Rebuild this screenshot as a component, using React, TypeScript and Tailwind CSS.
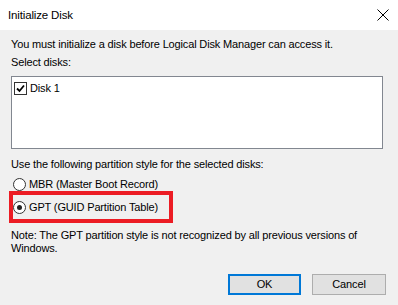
export default function App() {
  return (
    <div className="w-[398px] h-[305px] bg-[#f0f0f0] text-[11px] tracking-[-0.15px] text-black font-['Liberation_Sans',sans-serif] whitespace-nowrap overflow-hidden">
      <div className="h-[30px] bg-white flex items-center justify-between pl-[8px] pr-[9px]">
        <span className="leading-[15px] text-[11.5px]">Initialize Disk</span>
        <svg width="12" height="12" viewBox="0 0 12 12" className="text-black">
          <path d="M0.5 0.5 L11.5 11.5 M11.5 0.5 L0.5 11.5" stroke="currentColor" strokeWidth="1" />
        </svg>
      </div>

      <div className="px-[11px] pt-[7px]">
        <p className="leading-[15px]">You must initialize a disk before Logical Disk Manager can access it.</p>
        <p className="leading-[15px] mt-[3px]">Select disks:</p>

        <div className="mt-[6px] h-[73px] w-[372px] bg-white border border-[#828790] pt-[4px] pl-[2px]">
          <div className="flex items-center gap-[3px] leading-[15px]">
            <span className="w-[13px] h-[13px] border border-[#333] bg-white flex items-center justify-center">
              <svg width="9" height="9" viewBox="0 0 9 9">
                <path d="M1 4.5 L3.5 7 L8 1.5" stroke="#000" strokeWidth="1.8" fill="none" />
              </svg>
            </span>
            <span>Disk 1</span>
          </div>
        </div>

        <p className="leading-[15px] mt-[8px]">Use the following partition style for the selected disks:</p>

        <div className="mt-[6px] flex items-center gap-[3px] leading-[13px] ml-[2px]">
          <span className="w-[13px] h-[13px] rounded-full border border-[#333] bg-white" />
          <span>MBR (Master Boot Record)</span>
        </div>

        <div className="ml-[-2px] w-[164px] h-[32px] border-[4px] border-[#ec1c24] flex items-center gap-[3px] pl-0">
          <span className="w-[13px] h-[13px] rounded-full border border-[#333] bg-white flex items-center justify-center">
            <span className="w-[5px] h-[5px] rounded-full bg-[#222]" />
          </span>
          <span className="leading-[15px]">GPT (GUID Partition Table)</span>
        </div>

        <p className="mt-[6px] leading-[13px]">
          Note: The GPT partition style is not recognized by all previous versions of
          <br />
          Windows.
        </p>

        <div className="mt-[19px] mr-[1px] flex justify-end gap-[11px]">
          <button className="w-[73px] h-[21px] bg-[#e1e1e1] border-2 border-[#0078d7] leading-[15px]">OK</button>
          <button className="w-[74px] h-[21px] bg-[#e1e1e1] border border-[#adadad] leading-[15px]">Cancel</button>
        </div>
      </div>
    </div>
  );
}
